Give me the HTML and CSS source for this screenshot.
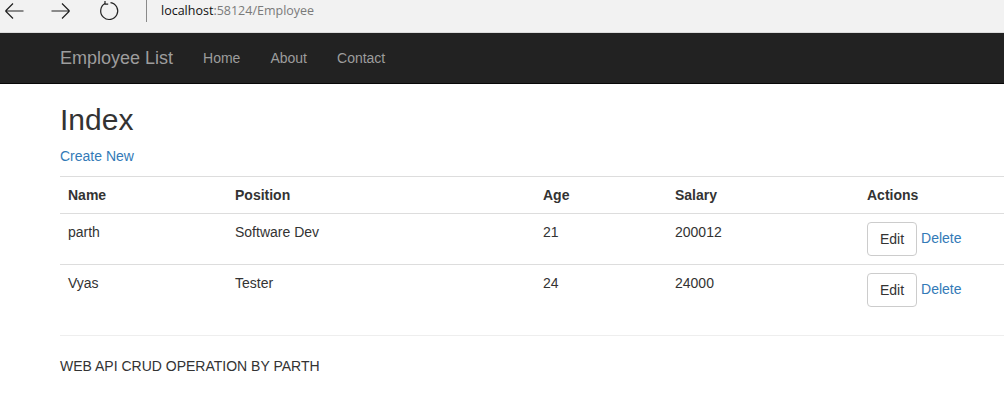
FILE: index.html
```html
<!DOCTYPE html>
<html>
<head>
<meta charset="utf-8">
<title>Index</title>
<link rel="stylesheet" href="styles.css">
</head>
<body>
<div class="chrome">
  <div class="chrome-buttons">
    <svg class="chrome-icon" width="22" height="22" viewBox="0 0 22 22"><path d="M3.5 11H21.5M3.5 11L11 3.5M3.5 11L11 18.5" fill="none" stroke="#222" stroke-width="1.2"/></svg>
    <svg class="chrome-icon" width="22" height="22" viewBox="0 0 22 22"><path d="M1.5 11H19.5M19.5 11L12 3.5M19.5 11L12 18.5" fill="none" stroke="#222" stroke-width="1.2"/></svg>
    <svg class="chrome-icon" width="22" height="22" viewBox="0 0 22 22"><path d="M7 3.6A8.5 8.5 0 1 0 12.5 2.6" fill="none" stroke="#222" stroke-width="1.2"/><path d="M7 1V4.2H10.2" fill="none" stroke="#222" stroke-width="1.2"/></svg>
  </div>
  <div class="chrome-sep"></div>
  <div class="url"><span class="host">localhost</span>:58124/Employee</div>
</div>
<div class="navbar">
  <div class="container nav-inner">
    <a class="brand" href="#">Employee List</a>
    <ul class="nav">
      <li><a href="#">Home</a></li>
      <li><a href="#">About</a></li>
      <li><a href="#">Contact</a></li>
    </ul>
  </div>
</div>
<div class="container body-content">
  <h2>Index</h2>
  <p class="create"><a href="#">Create New</a></p>
  <table class="table">
    <thead>
      <tr><th class="c-name">Name</th><th class="c-pos">Position</th><th class="c-age">Age</th><th class="c-sal">Salary</th><th>Actions</th></tr>
    </thead>
    <tbody>
      <tr><td>parth</td><td>Software Dev</td><td>21</td><td>200012</td><td><button class="btn">Edit</button> <a href="#">Delete</a></td></tr>
      <tr><td>Vyas</td><td>Tester</td><td>24</td><td>24000</td><td><button class="btn">Edit</button> <a href="#">Delete</a></td></tr>
    </tbody>
  </table>
  <hr>
  <footer><p>WEB API CRUD OPERATION BY PARTH</p></footer>
</div>
</body>
</html>
```
FILE: styles.css
```css
* { box-sizing: border-box; }
html, body { margin: 0; padding: 0; }
body {
  font-family: "Liberation Sans", Arial, sans-serif;
  font-size: 14px;
  line-height: 20px;
  color: #333;
  background: #fff;
  overflow: hidden;
}
a { color: #337ab7; text-decoration: none; }

.chrome {
  height: 33px;
  background: #f2f2f2;
  border-bottom: 1px solid #dcdcdc;
  display: flex;
  align-items: flex-start;
}
.chrome-buttons {
  display: flex;
  padding-left: 2px;
  gap: 26px;
}
.chrome-icon { display: block; }
.chrome-sep {
  width: 1px;
  height: 22px;
  background: #8a8a8a;
  margin-left: 26px;
}
.url {
  margin-left: 14px;
  font-family: "Open Sans", "Noto Sans", sans-serif;
  font-size: 12.5px;
  line-height: 22px;
  color: #7a7a7a;
}
.url .host { color: #111; }

.container {
  padding-left: 60px;
}
.navbar {
  height: 51px;
  background: #222;
  border-bottom: 1px solid #080808;
}
.nav-inner {
  display: flex;
  align-items: center;
  height: 50px;
}
.brand {
  font-size: 18px;
  line-height: 20px;
  color: #9d9d9d;
  padding-right: 15px;
}
.nav {
  list-style: none;
  margin: 0;
  padding: 0;
  display: flex;
}
.nav a {
  display: block;
  padding: 15px;
  color: #9d9d9d;
  line-height: 20px;
}

.body-content h2 {
  font-size: 30px;
  font-weight: 500;
  line-height: 33px;
  margin: 19px 0 10px;
}
.create { margin: 0 0 10px; }

.table {
  width: 100%;
  table-layout: fixed;
  border-collapse: collapse;
  border-spacing: 0;
  margin-bottom: 20px;
}
.table th, .table td {
  padding: 8px;
  text-align: left;
  vertical-align: top;
  line-height: 20px;
  border-top: 1px solid #ddd;
  white-space: nowrap;
}
.table th {
  font-weight: bold;
  border-bottom: 1px solid #ddd;
}
.c-name { width: 167px; }
.c-pos { width: 308px; }
.c-age { width: 132px; }
.c-sal { width: 192px; }

.btn {
  font-family: inherit;
  font-size: 14px;
  line-height: 20px;
  padding: 6px 12px;
  color: #333;
  background: #fff;
  border: 1px solid #ccc;
  border-radius: 4px;
  vertical-align: middle;
}

hr {
  margin: 20px 0;
  border: 0;
  border-top: 1px solid #eee;
  height: 0;
}
footer p { margin: 0 0 10px; }
```
